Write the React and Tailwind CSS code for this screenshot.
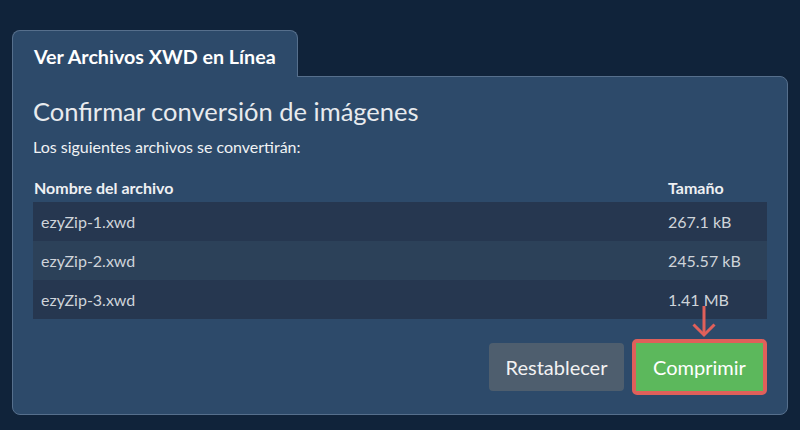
import React from "react";

const rows = [
  { name: "ezyZip-1.xwd", size: "267.1 kB" },
  { name: "ezyZip-2.xwd", size: "245.57 kB" },
  { name: "ezyZip-3.xwd", size: "1.41 MB" },
];

export default function App() {
  return (
    <div className="w-[800px] h-[430px] bg-[#10233a] pt-[30px] px-[12px] font-['Lato','Noto_Sans',sans-serif] overflow-hidden">
      <div className="relative z-10 -mb-px w-[286px] h-[47px] bg-[#2d4a6a] border border-b-0 border-[#566f8c] rounded-t-[8px] pl-[21px] pt-[14px]">
        <span className="text-[19.7px] leading-[24px] font-bold text-white">Ver Archivos XWD en Línea</span>
      </div>
      <div className="bg-[#2d4a6a] border border-[#566f8c] rounded-b-[8px] rounded-tr-[8px] pl-[20px] pr-[20px] pt-[19px] pb-[19px]">
        <h1 className="text-[25.5px] leading-[31px] text-[#e8ebee] font-normal">Confirmar conversión de imágenes</h1>
        <p className="mt-[9px] text-[16px] leading-[22px] text-[#f0f2f4]">Los siguientes archivos se convertirán:</p>
        <div className="mt-[19px]">
          <div className="grid grid-cols-[1fr_107px] pb-[3px] text-[16px] leading-[22px] font-bold text-[#eef0f3]">
            <div className="pl-[1px]">Nombre del archivo</div>
            <div className="pl-[8px]">Tamaño</div>
          </div>
          {rows.map((r, i) => (
            <div
              key={r.name}
              className={`grid grid-cols-[1fr_107px] h-[39px] items-center text-[16px] text-[#cfd4da] ${i % 2 === 0 ? "bg-[#263750]" : "bg-[#2c4159]"}`}
            >
              <div className="pl-[8px]">{r.name}</div>
              <div className="pl-[8px]">{r.size}</div>
            </div>
          ))}
        </div>
        <div className="mt-[20px] flex justify-end items-center gap-[8px]">
          <button className="w-[135px] h-[48px] rounded-[4px] bg-[#4e5e6e] text-[20px] text-[#f2f2f2]">Restablecer</button>
          <div className="relative border-[4px] border-[#e0605a] rounded-[5px]">
            <svg className="absolute left-[53px] top-[-41px]" width="30" height="36" viewBox="0 0 30 36" fill="none">
              <path d="M15 4 V33" stroke="#e0605a" strokeWidth="3" />
              <path d="M4.5 22.5 L15 33 L25.5 22.5" stroke="#e0605a" strokeWidth="3" />
            </svg>
            <button className="block w-[127px] h-[48px] bg-[#5cb85c] text-[20px] text-white">Comprimir</button>
          </div>
        </div>
      </div>
    </div>
  );
}
